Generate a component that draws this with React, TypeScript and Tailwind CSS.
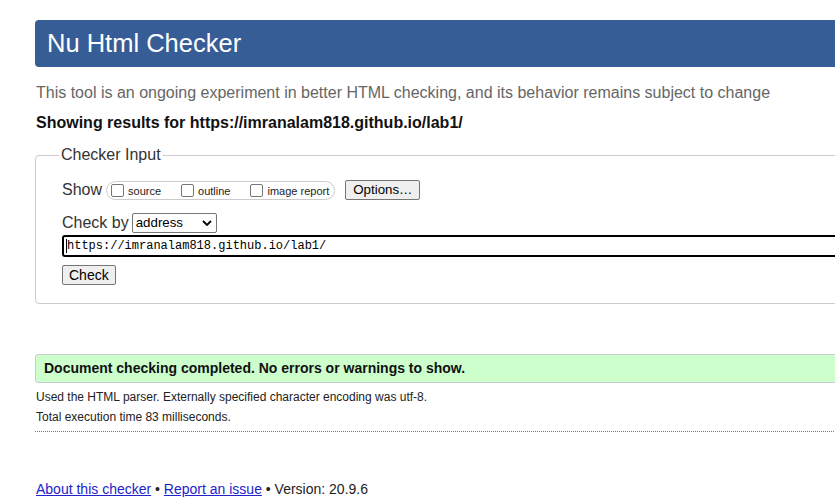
import React from 'react'

const Box = ({ label }: { label: string }) => (
  <label className="flex items-center gap-[4px]">
    <input type="checkbox" className="appearance-none w-[13px] h-[13px] border border-[#767676] rounded-[2px] bg-white" />
    <span className="pt-[2px] text-[11px] leading-none text-[#222]">{label}</span>
  </label>
)

const App = () => {
  return (
    <div className="w-[835px] h-[501px] overflow-hidden bg-white font-['Liberation_Sans',Arial,sans-serif] text-[#222]">
      <div className="w-[960px] pl-[35px] pt-[20px]">
        {/* header */}
        <div className="h-[47px] bg-[#365d95] rounded-l-[4px] flex items-center px-[12px]">
          <h1 className="text-white text-[25.5px] leading-none">Nu Html Checker</h1>
        </div>

        <p className="mt-[17px] pl-[1px] text-[16px] leading-[18px] text-[#666]">
          This tool is an ongoing experiment in better HTML checking, and its behavior remains subject to change
        </p>
        <p className="mt-[12px] pl-[1px] text-[16px] leading-[18px] font-bold text-[#111]">
          Showing results for https://imranalam818.github.io/lab1/
        </p>

        {/* checker input */}
        <fieldset className="mt-[14px] border border-[#ccc] rounded-[4px] pl-[26px] pb-[16px]">
          <legend className="ml-[-3px] px-[2px] text-[16px] leading-[18px] text-[#333]">Checker Input</legend>

          <div className="mt-[16px] flex items-center h-[20px]">
            <span className="text-[16px] text-[#333]">Show</span>
            <div className="ml-[4px] h-[19px] flex items-center gap-[20px] border border-[#ccc] rounded-full pl-[4px] pr-[5px]">
              <Box label="source" />
              <Box label="outline" />
              <Box label="image report" />
            </div>
            <button className="ml-[10px] h-[20px] px-[7px] bg-[#efefef] border border-[#767676] rounded-[2px] text-[13.3px] leading-none text-black">
              Options…
            </button>
          </div>

          <div className="mt-[13px] flex items-center h-[20px]">
            <span className="text-[16px] text-[#333]">Check by</span>
            <div className="ml-[3px] w-[85px] h-[20px] border border-[#767676] rounded-[2px] flex items-center justify-between pl-[3px] pr-[4px]">
              <span className="text-[13.3px] leading-none text-black">address</span>
              <svg width="10" height="6" viewBox="0 0 10 6">
                <path d="M1 1 L5 5 L9 1" fill="none" stroke="#000" strokeWidth="1.8" />
              </svg>
            </div>
          </div>

          <div className="mt-[2px] h-[22px] border-2 border-black rounded-[3px] flex items-center pl-[2px]">
            <span className="w-[1px] h-[14px] bg-black"></span>
            <span className="font-['Liberation_Mono',monospace] text-[12px] leading-none text-black">https://imranalam818.github.io/lab1/</span>
          </div>

          <button className="mt-[8px] h-[20px] px-[6px] bg-[#efefef] border border-[#767676] rounded-[2px] text-[14px] leading-none text-black">
            Check
          </button>
        </fieldset>

        {/* result */}
        <div className="mt-[50px] h-[29px] bg-[#ccffcc] border border-[#ccc] rounded-[3px] flex items-center pl-[8px]">
          <span className="text-[14px] font-bold text-[#111]">Document checking completed. No errors or warnings to show.</span>
        </div>

        <p className="mt-[4px] pl-[1px] text-[12px] leading-[20px] text-[#222]">
          Used the HTML parser. Externally specified character encoding was utf-8.
        </p>
        <p className="pl-[1px] text-[12px] leading-[20px] text-[#222]">Total execution time 83 milliseconds.</p>
        <div className="mt-[4px] border-t border-dotted border-[#777]"></div>

        <div className="mt-[48px] pl-[1px] text-[14px] leading-[18px] text-[#222]">
          <a href="#" className="text-[#2222cc] underline">About this checker</a>
          <span> • </span>
          <a href="#" className="text-[#2222cc] underline">Report an issue</a>
          <span> • Version: 20.9.6</span>
        </div>
      </div>
    </div>
  )
}

export default App
